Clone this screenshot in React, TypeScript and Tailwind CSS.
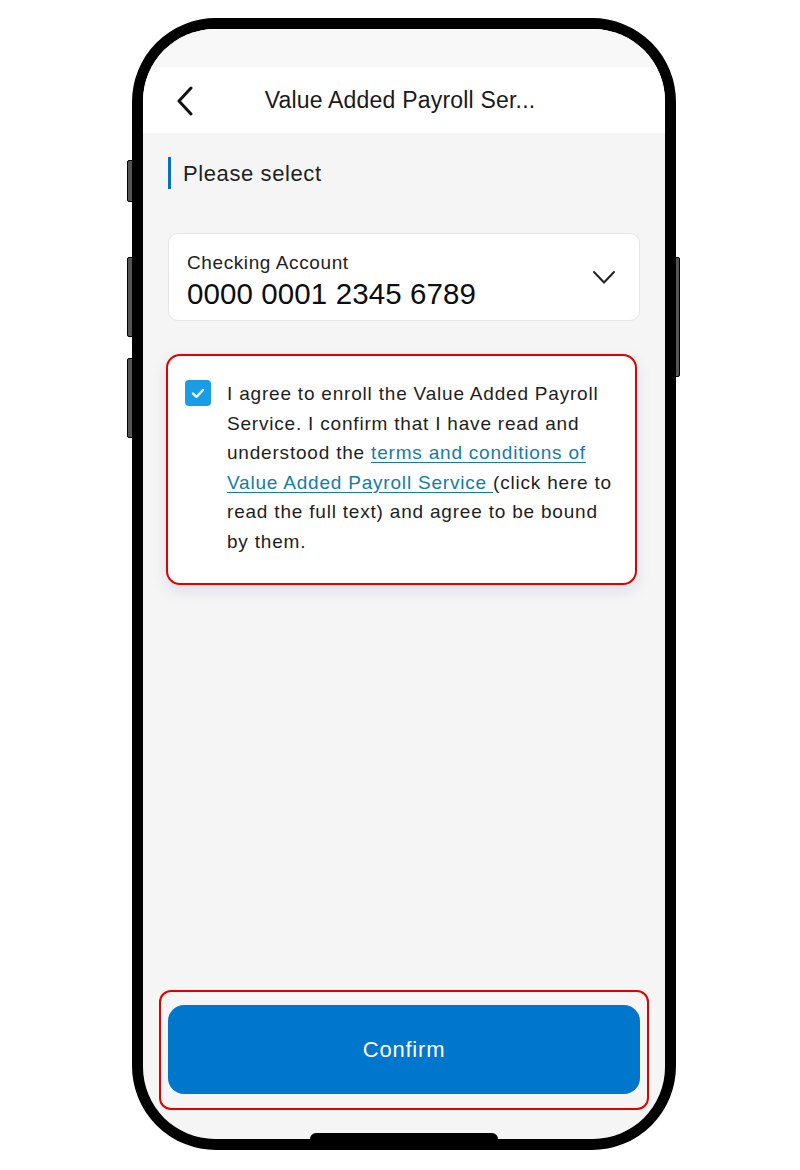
import React from 'react';

const font = { fontFamily: '"Liberation Sans", Arial, sans-serif' };

const BackIcon = () => (
  <svg width="18" height="30" viewBox="0 0 18 30" fill="none">
    <path d="M15 2 L3 15 L15 28" stroke="#111" strokeWidth="3" strokeLinecap="round" strokeLinejoin="round" />
  </svg>
);

const ChevronDown = () => (
  <svg width="24" height="15" viewBox="0 0 24 15" fill="none">
    <path d="M2 2 L12 12.5 L22 2" stroke="#222" strokeWidth="2" strokeLinecap="round" strokeLinejoin="round" />
  </svg>
);

const App: React.FC = () => {
  return (
    <div className="w-[800px] h-[1170px] bg-white overflow-hidden" style={font}>
      <div className="pt-[18px] pl-[132px]">
        <div className="relative w-[544px] h-[1132px]">
          {/* side buttons */}
          <div className="absolute left-[-5px] top-[142px] w-[6px] h-[42px] rounded-l-[2px] bg-[#555] border border-black" />
          <div className="absolute left-[-5px] top-[239px] w-[6px] h-[80px] rounded-l-[2px] bg-[#555] border border-black" />
          <div className="absolute left-[-5px] top-[340px] w-[6px] h-[80px] rounded-l-[2px] bg-[#555] border border-black" />
          <div className="absolute right-[-4px] top-[239px] w-[5px] h-[120px] rounded-r-[2px] bg-[#555] border border-black" />

          {/* frame */}
          <div className="relative w-full h-full rounded-[84px] border-[11px] border-black bg-black shadow-[inset_0_0_0_1px_#444]">
            <div className="relative w-full h-full rounded-[72px] overflow-hidden bg-[#f5f5f5] flex flex-col">
              {/* status area */}
              <div className="h-[38px] bg-[#f8f8f8]" />

              {/* header */}
              <div className="relative h-[66px] bg-white flex items-center justify-center">
                <div className="absolute left-[33px] top-[19px]">
                  <BackIcon />
                </div>
                <h1 className="text-[23px] tracking-[0.2px] text-[#1a1a1a] pr-[8px]">Value Added Payroll Ser...</h1>
              </div>

              {/* body */}
              <div className="flex-1 flex flex-col px-[25px] pb-[29px]">
                <div className="mt-[24px] h-[32px] flex items-center gap-[12px]">
                  <div className="w-[3px] h-[32px] bg-[#0a6fbf]" />
                  <span className="text-[22px] tracking-[0.6px] text-[#1f1f1f]">Please select</span>
                </div>

                <div className="mt-[44px] h-[88px] rounded-[10px] border border-[#e6e6e6] bg-white flex items-start justify-between pl-[18px] pr-[23px]">
                  <div className="flex flex-col pt-[17px]">
                    <span className="text-[19px] leading-[24px] tracking-[0.6px] text-[#222]">Checking Account</span>
                    <span className="text-[29.5px] leading-[38px] tracking-[0.1px] text-[#0d0d0d]">0000 0001 2345 6789</span>
                  </div>
                  <div className="pt-[36px]">
                    <ChevronDown />
                  </div>
                </div>

                <div className="mt-[33px] -ml-[2px] w-[471px] h-[231px] rounded-[14px] border-2 border-[#e00000] bg-white shadow-[0_6px_14px_rgba(130,130,200,0.18)] flex gap-[16px] pl-[17px] pt-[24px]">
                  <div className="w-[26px] h-[26px] shrink-0 rounded-[4px] bg-[#1a9de8] flex items-center justify-center">
                    <svg width="14" height="11" viewBox="0 0 14 11" fill="none">
                      <path d="M2 5.5 L5.5 9 L12 2" stroke="#fff" strokeWidth="2.4" strokeLinecap="round" strokeLinejoin="round" />
                    </svg>
                  </div>
                  <p className="w-[395px] -mt-[1px] text-[19px] leading-[29.6px] tracking-[0.8px] text-[#1e1e1e]">
                    I agree to enroll the Value Added Payroll Service. I confirm that I have read and understood the{' '}
                    <span className="text-[#157ca6] underline underline-offset-[3px]">terms and conditions of Value Added Payroll Service </span>
                    (click here to read the full text) and agree to be bound by them.
                  </p>
                </div>

                <div className="flex-1" />

                <div className="-mx-[9px] rounded-[12px] border-2 border-[#e00000] pt-[13px] pb-[14px] px-[7px]">
                  <button className="w-full h-[89px] rounded-[16px] bg-[#0076cc] text-white text-[22px] tracking-[0.8px]">
                    Confirm
                  </button>
                </div>
              </div>

              {/* home indicator */}
              <div className="absolute bottom-0 left-[167px] w-[188px] h-[6px] rounded-t-full bg-black" />
            </div>
          </div>
        </div>
      </div>
    </div>
  );
};

export default App;
